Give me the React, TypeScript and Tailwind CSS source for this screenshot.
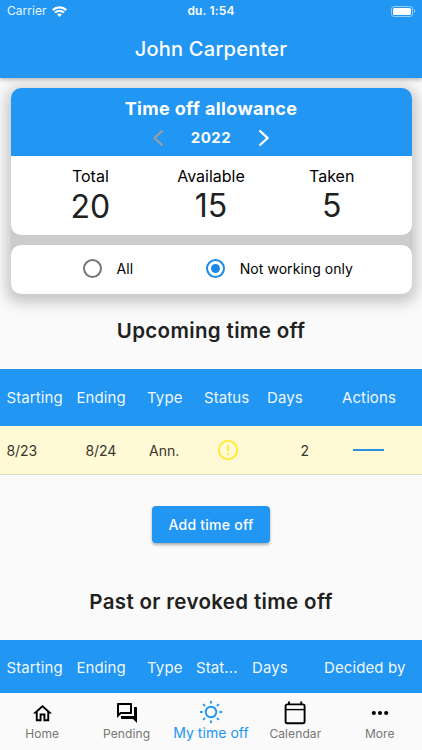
import React from "react";

type Cell = { label: string; className: string };

const upcomingColumns: Cell[] = [
  { label: "Starting", className: "w-[70px]" },
  { label: "Ending", className: "w-[70.5px]" },
  { label: "Type", className: "w-[57px]" },
  { label: "Status", className: "w-[63px]" },
  { label: "Days", className: "w-[75px]" },
  { label: "Actions", className: "w-[60px]" },
];

const pastColumns: Cell[] = [
  { label: "Starting", className: "w-[70px]" },
  { label: "Ending", className: "w-[70.5px]" },
  { label: "Type", className: "w-[49px]" },
  { label: "Stat...", className: "w-[56px]" },
  { label: "Days", className: "w-[72px]" },
  { label: "Decided by", className: "w-[90px]" },
];

const allowance = [
  { label: "Total", value: "20", className: "pt-[2px]" },
  { label: "Available", value: "15", className: "pt-[0.5px]" },
  { label: "Taken", value: "5", className: "pt-[0.5px]" },
];

function TableHeader({ columns, className }: { columns: Cell[]; className: string }) {
  return (
    <div className={`flex shrink-0 items-center bg-[#2196f3] pl-[6.5px] text-[15px] leading-5 tracking-[0.1px] whitespace-nowrap text-white/95 ${className}`}>
      {columns.map((c) => (
        <span key={c.label} className={`shrink-0 ${c.className}`}>
          {c.label}
        </span>
      ))}
    </div>
  );
}

function Radio({ selected }: { selected?: boolean }) {
  return (
    <span className={`flex size-[19px] items-center justify-center rounded-full border-2 ${selected ? "border-[#1e88e5]" : "border-[#757575]"}`}>
      {selected && <span className="size-[9px] rounded-full bg-[#1e88e5]" />}
    </span>
  );
}

function Tab({ label, active, children }: { label: string; active?: boolean; children: React.ReactNode }) {
  return (
    <div className={`flex w-1/5 flex-col items-center whitespace-nowrap ${active ? "text-[#2196f3]" : "text-black"}`}>
      <div className={`flex h-6 items-center ${active ? "mt-[7px]" : "mt-2"}`}>{children}</div>
      <span className={active ? "text-[14px] leading-[18px] tracking-[0.05px]" : "text-[12px] leading-[17px] tracking-[0.1px] text-[#757575]"}>
        {label}
      </span>
    </div>
  );
}

export default function App() {
  return (
    <div className="flex h-[750px] w-[422px] flex-col overflow-hidden bg-[#fafafa] font-['Inter',sans-serif] text-[#212121]">
      <header className="z-10 h-[78px] shrink-0 bg-[#2196f3] text-white shadow-[0_2px_4px_rgba(0,0,0,0.25)]">
        <div className="grid h-[22px] grid-cols-3 items-center px-[7px] text-[12px] leading-4">
          <div className="flex items-center gap-[5px] text-white/90">
            <span className="tracking-[0.05px]">Carrier</span>
            <svg width="15" height="11" viewBox="0 0 15 11" fill="none" stroke="white" strokeWidth="2.3">
              <path d="M.8 4.1a9.5 9.5 0 0 1 13.4 0M3.1 6.8a6.2 6.2 0 0 1 8.8 0" />
              <path d="M7.5 11 5.2 8.7a3.3 3.3 0 0 1 4.6 0z" fill="white" stroke="none" />
            </svg>
          </div>
          <span className="text-center font-semibold tracking-[0.15px]">du. 1:54</span>
          <div className="flex items-center justify-end">
            <span className="flex h-[11px] w-[22px] rounded-[3px] border border-white/50 p-[1px]">
              <span className="flex-1 rounded-[1.5px] bg-white" />
            </span>
            <span className="ml-[1px] h-1 w-[1px] rounded-r bg-white/50" />
          </div>
        </div>
        <h1 className="mt-[13px] text-center text-[20px] leading-7 font-medium tracking-[0.25px]">John Carpenter</h1>
      </header>

      <section className="mx-[10.5px] mt-[10px] flex h-[205.5px] shrink-0 flex-col gap-[10px] rounded-[10px] bg-[#cccccc] shadow-[0_4px_13px_5px_rgba(158,158,158,0.55)]">
        <div className="h-[146.5px] overflow-hidden rounded-[10px] bg-white">
          <div className="flex h-[68px] flex-col items-center bg-[#2196f3] pt-[9px] font-bold text-white">
            <h2 className="text-[18px] leading-6 tracking-[0.35px]">Time off allowance</h2>
            <div className="mt-[6px] flex h-[22px] items-center gap-[27px]">
              <svg width="11" height="18" viewBox="0 0 11 18" fill="none" stroke="#9e9e9e" strokeWidth="2">
                <path d="m9.5 1.5-8 7.5 8 7.5" />
              </svg>
              <span className="text-[15px] tracking-[0.5px]">2022</span>
              <svg width="11" height="18" viewBox="0 0 11 18" fill="none" stroke="white" strokeWidth="2.3">
                <path d="m1.5 1.5 8 7.5-8 7.5" />
              </svg>
            </div>
          </div>
          <div className="flex px-[19.5px] pt-[10px]">
            {allowance.map((a) => (
              <div key={a.label} className="flex flex-1 flex-col items-center">
                <span className="text-[16px] leading-5 text-black">{a.label}</span>
                <span className={`text-[32px] leading-[38px] ${a.className}`}>{a.value}</span>
              </div>
            ))}
          </div>
        </div>
        <div className="flex h-[49px] items-center rounded-[10px] bg-white pb-[1px] pl-[72px] text-[14px] text-black">
          <Radio />
          <span className="ml-[15px] tracking-[0.1px]">All</span>
          <span className="ml-[72.5px]">
            <Radio selected />
          </span>
          <span className="ml-[15px] tracking-[0.05px] whitespace-nowrap">Not working only</span>
        </div>
      </section>

      <h2 className="mt-[23.5px] shrink-0 text-center text-[20.5px] leading-7 font-semibold tracking-[0.35px]">Upcoming time off</h2>
      <TableHeader columns={upcomingColumns} className="mt-6 h-[57px]" />
      <div className="flex h-[49px] shrink-0 items-center border-b border-[#dfdcc5] bg-[#fff9d6] pl-[6.5px] text-[14px] text-[#38372b]">
        <span className="w-[79px] tracking-[-0.1px]">8/23</span>
        <span className="w-[63.5px] tracking-[-0.1px]">8/24</span>
        <span className="w-[67.5px]">Ann.</span>
        <svg width="22" height="22" viewBox="0 0 22 22" fill="none" stroke="#ffeb3b" strokeWidth="2">
          <circle cx="11" cy="11" r="9.2" />
          <path d="M11 6v6.2M11 14v2" />
        </svg>
        <span className="w-[70.5px] text-right">2</span>
        <span className="ml-[44px] h-[2px] w-[31px] bg-[#2e8fdf]" />
      </div>
      <button className="mt-[31px] h-[37px] w-[118px] shrink-0 self-center rounded-[4px] bg-[#2196f3] text-[14px] font-medium tracking-[0.25px] text-white shadow-[0_2px_3px_rgba(0,0,0,0.3)]">
        Add time off
      </button>
      <h2 className="mt-[45px] shrink-0 text-center text-[20.5px] leading-7 font-semibold tracking-[0.35px]">Past or revoked time off</h2>
      <TableHeader columns={pastColumns} className="mt-6 h-[53px] pt-[3px]" />

      <nav className="flex h-[57px] shrink-0 bg-[#fafafa]">
        <Tab label="Home">
          <svg width="23" height="23" viewBox="0 0 24 24" fill="currentColor">
            <path d="m12 5.69 5 4.5V18h-2v-6H9v6H7v-7.81l5-4.5M12 3 2 12h3v8h6v-6h2v6h6v-8h3L12 3z" />
          </svg>
        </Tab>
        <Tab label="Pending">
          <svg width="24" height="24" viewBox="0 0 24 24" fill="currentColor">
            <path d="M15 4v7H5.17L4 12.17V4h11m1-2H3c-.55 0-1 .45-1 1v14l4-4h10c.55 0 1-.45 1-1V3c0-.55-.45-1-1-1zm5 4h-2v9H6v2c0 .55.45 1 1 1h11l4 4V7c0-.55-.45-1-1-1z" />
          </svg>
        </Tab>
        <Tab label="My time off" active>
          <svg width="24" height="24" viewBox="0 0 24 24" fill="none" stroke="currentColor" strokeWidth="1.9">
            <circle cx="12" cy="12" r="5.3" />
            <path d="M12 .9v2.6M12 20.5v2.6M.9 12h2.6M20.5 12h2.6M4.2 4.2l1.8 1.8M18 18l1.8 1.8M4.2 19.8 6 18M18 6l1.8-1.8" />
          </svg>
        </Tab>
        <Tab label="Calendar">
          <svg width="24" height="24" viewBox="0 0 24 24" fill="none" stroke="currentColor" strokeWidth="1.9">
            <rect x="2.6" y="3.4" width="19" height="18.8" rx="1.8" />
            <path d="M6 .6v3M18.2 .6v3" />
            <path d="M2.6 8.6h19" strokeWidth="1.4" />
          </svg>
        </Tab>
        <Tab label="More">
          <svg width="24" height="24" viewBox="0 0 24 24" fill="currentColor">
            <circle cx="5.8" cy="12" r="2.1" />
            <circle cx="12" cy="12" r="2.1" />
            <circle cx="18.2" cy="12" r="2.1" />
          </svg>
        </Tab>
      </nav>
    </div>
  );
}
